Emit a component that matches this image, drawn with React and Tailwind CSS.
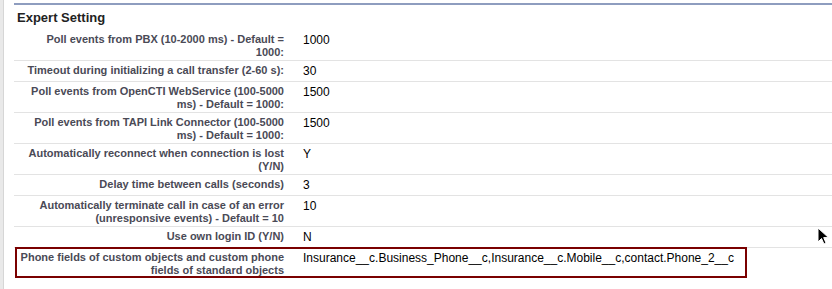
import React from 'react';

const rows = [
  { label: 'Poll events from PBX (10-2000 ms) - Default = 1000:', value: '1000', tall: true },
  { label: 'Timeout during initializing a call transfer (2-60 s):', value: '30' },
  { label: 'Poll events from OpenCTI WebService (100-5000 ms) - Default = 1000:', value: '1500', tall: true },
  { label: 'Poll events from TAPI Link Connector (100-5000 ms) - Default = 1000:', value: '1500', tall: true },
  { label: 'Automatically reconnect when connection is lost (Y/N)', value: 'Y', tall: true },
  { label: 'Delay time between calls (seconds)', value: '3' },
  { label: 'Automatically terminate call in case of an error (unresponsive events) - Default = 10', value: '10', tall: true },
  { label: 'Use own login ID (Y/N)', value: 'N' },
];

function Cursor() {
  return (
    <svg className="absolute left-[817px] top-[227px]" width="14" height="19" viewBox="0 0 14 19">
      <path d="M1 1 L1 15 L4.5 11.5 L7 17 L9 16 L6.7 10.6 L11.5 10.6 Z" fill="#000" stroke="#fff" strokeWidth="1" />
    </svg>
  );
}

export default function App() {
  return (
    <div className="relative w-[832px] h-[289px] bg-white flex overflow-hidden font-['Liberation_Sans',Arial,sans-serif]">
      {/* left frame strip */}
      <div className="w-[4px] h-full bg-[#e9e9e9] border-r border-[#d6d6d6]" />
      <div className="flex-1 ml-[10px] mt-[3px]">
        {/* section header */}
        <div className="h-[27px] border-t-2 border-[#8e9dbf] pt-[5px] pl-[3px]">
          <h2 className="text-[13px] leading-[16px] font-bold text-[#222]">Expert Setting</h2>
        </div>

        {rows.map((row, i) => (
          <div
            key={i}
            className={`flex border-b border-[#e3e3e3] ${row.tall ? 'h-[31px]' : 'h-[21px]'}`}
          >
            <div className="w-[270px] pl-[4px] pt-[3px] text-right text-[11px] leading-[13px] font-bold text-[#4a4a56]">
              {row.label}
            </div>
            <div className="pl-[19px] pt-[3px] text-[12px] leading-[14px] text-black">{row.value}</div>
          </div>
        ))}

        {/* highlighted row */}
        <div className="flex -mt-[1px] ml-[1px] w-[732px] h-[31px] border-2 border-[#7a0000]">
          <div className="w-[267px] pl-[1px] pt-[2px] text-right text-[11px] leading-[13px] font-bold text-[#4a4a56]">
            Phone fields of custom objects and custom phone fields of standard objects
          </div>
          <div className="pl-[19px] pt-[2px] text-[12px] leading-[14px] text-black whitespace-nowrap">
            Insurance__c.Business_Phone__c,Insurance__c.Mobile__c,contact.Phone_2__c
          </div>
        </div>
      </div>
      <Cursor />
    </div>
  );
}
